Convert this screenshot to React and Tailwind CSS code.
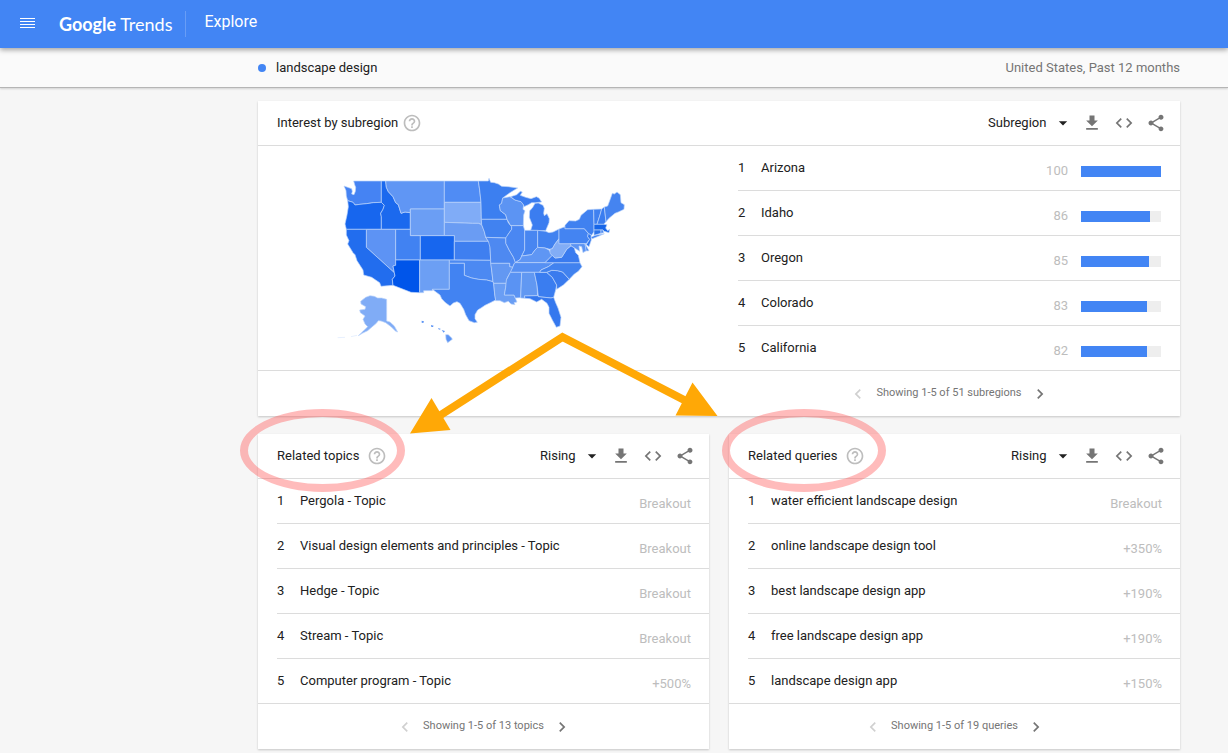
import React from 'react';
import {
  MdGetApp,
  MdCode,
  MdShare,
  MdHelpOutline,
  MdArrowDropDown,
  MdChevronLeft,
  MdChevronRight,
} from 'react-icons/md';

const subregions = [
  { name: 'Arizona', value: 100 },
  { name: 'Idaho', value: 86 },
  { name: 'Oregon', value: 85 },
  { name: 'Colorado', value: 83 },
  { name: 'California', value: 82 },
];

const topics = [
  { name: 'Pergola - Topic', value: 'Breakout' },
  { name: 'Visual design elements and principles - Topic', value: 'Breakout' },
  { name: 'Hedge - Topic', value: 'Breakout' },
  { name: 'Stream - Topic', value: 'Breakout' },
  { name: 'Computer program - Topic', value: '+500%' },
];

const queries = [
  { name: 'water efficient landscape design', value: 'Breakout' },
  { name: 'online landscape design tool', value: '+350%' },
  { name: 'best landscape design app', value: '+190%' },
  { name: 'free landscape design app', value: '+190%' },
  { name: 'landscape design app', value: '+150%' },
];

// [state, fill, outline]
const states = [
  ['WA', '#4583f3', '27,48 38,52 50,56 52,64 50,72 57,74 61,64 62,52 59,44 56,33 139,33 139,97 115,98 95,101 75,103 60,105 54,97 38,92 34,78 33,62'],
  ['OR', '#1766ee', '38,92 54,97 60,105 75,103 95,101 115,98 139,97 148,106 144,118 137,130 139,140 139,178 34,178 30,162 36,135 40,110'],
  ['ID', '#1b69ee', '139,33 152,33 154,52 160,65 174,80 182,98 190,104 198,130 210,126 226,128 226,178 139,178 139,140 137,130 144,118 148,106 139,97'],
  ['MT', '#6096f4', '152,33 328,33 328,117 226,117 226,128 210,126 198,130 190,104 182,98 174,80 160,65 154,52'],
  ['WY', '#6b9ef4', '226,117 328,117 328,197 226,197'],
  ['ND', '#508cf4', '328,33 430,33 434,60 438,97 328,97'],
  ['SD', '#80acf7', '328,97 438,97 439,148 440,164 430,160 412,160 328,157'],
  ['NE', '#6a9cf3', '328,157 412,160 430,160 440,164 448,185 452,202 460,214 358,214 358,197 328,197'],
  ['NV', '#5d93f4', '94,178 182,178 182,286 174,288 178,308 94,232'],
  ['CA', '#226dee', '34,178 94,178 94,232 178,308 180,318 172,328 174,346 138,349 134,338 122,330 110,322 86,315 84,300 66,272 60,254 54,248 38,222 42,212 34,195'],
  ['UT', '#4182f2', '182,178 226,178 226,197 256,197 256,270 182,270'],
  ['CO', '#1766ee', '256,197 358,197 358,270 256,270'],
  ['AZ', '#0055ea', '182,270 254,270 254,368 228,367 174,346 172,328 180,318 178,308 174,288 182,286'],
  ['NM', '#6c9ff4', '254,270 343,270 343,358 292,358 292,362 266,362 266,368 254,368'],
  ['KS', '#3f7ff0', '358,214 460,214 466,222 465,232 467,271 358,270'],
  ['OK', '#4c89f2', '343,270 467,271 470,300 474,335 455,330 430,328 410,324 388,316 388,280 343,280'],
  ['TX', '#4283f2', '343,280 388,280 388,316 410,324 430,328 455,330 474,335 476,340 479,372 482,390 466,398 450,406 438,414 428,420 420,434 420,446 427,457 418,458 402,452 392,434 386,418 375,400 366,395 355,399 345,408 330,397 320,386 315,375 292,358 343,358'],
  ['MN', '#3c7ff0', '430,33 460,33 462,25 467,37 478,38 490,42 500,49 520,50 548,54 525,68 503,84 500,100 493,105 496,122 512,134 516,148 439,148 438,97 434,60'],
  ['IA', '#4182f0', '439,148 516,148 520,158 530,170 530,178 520,192 516,200 512,204 452,202 448,185 440,164'],
  ['WI', '#5c94f3', '503,84 525,80 540,90 558,95 566,105 564,118 570,122 566,135 565,167 527,167 516,148 512,134 496,122 493,105 500,100'],
  ['MI', '#3b7df0', '527,80 545,74 556,64 562,66 556,76 572,82 588,86 604,80 612,84 620,96 602,98 590,98 580,104 567,110 566,105 558,95 540,90'],
  ['MI-lower', '#3b7df0', '600,100 610,99 624,106 628,115 626,130 628,137 636,131 643,146 642,158 632,182 587,181 592,165 583,142 584,122 592,114'],
  ['IL', '#4a87f2', '527,167 565,167 569,181 569,240 562,254 556,268 541,278 535,262 522,240 512,220 512,204 520,192 530,178 530,170'],
  ['MO', '#4e89f1', '452,202 512,204 512,220 522,240 535,262 541,278 538,280 533,292 524,290 524,280 467,280 467,271 465,232 460,214'],
  ['IN', '#4886f1', '569,181 608,181 608,232 600,240 590,254 560,258 562,254 569,240'],
  ['OH', '#4182f0', '608,181 632,184 642,188 654,186 672,177 672,206 660,222 652,236 645,238 630,234 608,232'],
  ['KY', '#5f96f4', '541,278 556,268 560,258 590,254 600,240 608,232 630,234 642,240 652,256 630,278'],
  ['TN', '#5690f3', '538,280 541,278 657,278 640,290 618,300 614,307 524,307 533,292'],
  ['AR', '#6398f2', '467,280 524,280 524,290 533,292 526,307 516,325 514,340 476,340 474,335 470,300'],
  ['LA', '#6a9ef4', '476,340 514,340 512,352 508,375 537,375 541,384 546,396 537,398 540,404 528,402 520,394 508,398 495,392 482,392 479,372'],
  ['MS', '#5a93f3', '526,307 560,307 557,383 541,384 537,375 508,375 512,352 514,330'],
  ['AL', '#6198f2', '560,307 598,307 606,345 608,377 568,378 570,385 557,384'],
  ['GA', '#3a7df0', '598,307 635,307 652,322 665,345 662,360 656,382 648,384 610,380 606,345'],
  ['FL', '#3578ee', '568,378 608,377 610,380 648,384 656,382 662,398 669,414 678,442 675,468 664,472 652,450 642,430 642,412 636,400 620,388 605,396 585,386 570,385'],
  ['SC', '#3a7bee', '635,307 650,301 668,302 683,306 703,328 685,345 665,358 665,345 652,322'],
  ['NC', '#4182ef', '657,278 735,278 741,290 730,304 718,312 703,328 683,306 668,302 650,301 635,307 614,307 618,300 640,290'],
  ['VA', '#3a7bef', '630,278 652,256 660,264 680,262 695,238 708,227 718,234 722,248 730,256 735,278'],
  ['WV', '#82adf6', '672,206 673,221 706,221 708,227 695,238 680,262 660,264 645,250 645,238 652,236 660,222'],
  ['PA', '#4484f2', '672,177 690,170 690,176 748,176 760,190 758,200 764,208 754,221 672,221'],
  ['MD', '#5c94f3', '706,221 750,221 754,242 744,248 740,230 732,228 734,244 722,236 708,227'],
  ['DE', '#4484f2', '750,221 756,232 762,242 754,243'],
  ['NJ', '#3076ee', '760,190 768,194 769,210 762,230 754,224 764,208 758,200'],
  ['NY', '#4081f0', '690,176 690,166 702,152 722,153 733,148 738,136 758,119 776,118 777,163 777,185 770,196 760,190 748,176'],
  ['LI', '#4081f0', '768,202 780,196 808,191 790,199 772,206'],
  ['VT', '#4081f0', '776,118 800,117 795,135 786,163 777,163'],
  ['NH', '#3a7df0', '800,117 808,111 813,155 806,163 786,163 795,135'],
  ['ME', '#4584f0', '808,111 818,108 824,92 832,70 838,72 846,66 856,74 858,98 868,104 867,118 850,126 840,130 822,145 813,155'],
  ['MA', '#1766e8', '777,163 806,163 816,164 812,174 818,182 824,178 822,188 808,184 804,180 777,180'],
  ['CT', '#2e74ea', '777,180 798,180 798,190 777,196'],
  ['RI', '#4584f0', '798,180 804,180 806,188 798,190'],
  ['AK', '#80acf6', '105,377 118,379 128,384 140,384 155,388 155,453 165,456 178,468 188,486 182,484 168,470 152,458 138,453 130,452 124,460 112,470 98,482 82,490 70,497 84,484 98,470 90,462 84,448 90,438 76,428 74,420 90,418 92,410 78,402 77,394 92,382'],
  ['HI', '#5c94f4', '332,494 340,494 350,504 352,508 338,518 333,508'],
];

const UsMap = () => (
  <svg className="h-[180px] w-[300px]" viewBox="0 0 900 540" role="img" aria-label="Interest by state">
    {states.map(([id, fill, points]) => (
      <polygon key={id} points={points} fill={fill} stroke="#bcd5fb" strokeWidth="2" strokeLinejoin="round" />
    ))}
    {/* Smaller Hawaiian islands */}
    <path d="M260,452 L267,454 L265,459 L260,458 Z M288,465 L296,467 L294,471 L289,471 Z M309,474 L318,477 L312,479 Z M320,480 L330,483 L326,488 Z" fill="#5c94f4" />
    {/* Aleutians */}
    <path d="M8,503 L30,502 M48,500 L66,496" stroke="#dbe8fd" strokeWidth="2" />
  </svg>
);

const HeaderArrows = () => (
  <svg
    className="pointer-events-none absolute right-1/2 top-[229px] z-10 h-[106px] w-[310px]"
    viewBox="409 330 310 106"
    aria-hidden="true"
  >
    <path d="M436 418 L562.5 337 L690 403" fill="none" stroke="#ffa806" strokeWidth="8" />
    <path d="M410 433.500 L431.500 398 L450.500 430 Z M717.500 416 L692.500 382.500 L675.500 415.500 Z" fill="#ffa806" />
  </svg>
);

const CardHeader = ({ title, mode, helpClass = 'ml-2' }) => (
  <div className="flex h-[45px] items-center border-b border-[#dcdcdc] pl-[19px] pr-[14px]">
    <h2>{title}</h2>
    <button className={`text-[#bdbdbd] ${helpClass}`} aria-label={`Help: ${title}`}>
      <MdHelpOutline className="h-5 w-5" />
    </button>
    <div className="relative ml-auto mr-[9px] flex items-center">
      <select className="appearance-none bg-transparent pr-[26px]" aria-label={`${title} view`}>
        <option>{mode}</option>
      </select>
      <MdArrowDropDown className="pointer-events-none absolute right-0 h-5 w-5" />
    </div>
    <div className="flex gap-3 text-[#757575]">
      <button aria-label="Download CSV">
        <MdGetApp className="h-5 w-5" />
      </button>
      <button aria-label="Embed">
        <MdCode className="h-5 w-5" />
      </button>
      <button aria-label="Share">
        <MdShare className="h-5 w-5" />
      </button>
    </div>
  </div>
);

const Pager = ({ label, className = '' }) => (
  <div className={`flex h-[45px] items-center justify-center gap-2 text-[11px] text-[#757575] ${className}`}>
    <button className="text-[#d0d0d0]" disabled aria-label="Previous">
      <MdChevronLeft className="h-5 w-5" />
    </button>
    <span>{label}</span>
    <button aria-label="Next">
      <MdChevronRight className="h-5 w-5" />
    </button>
  </div>
);

const RelatedCard = ({ title, rows, label, children }) => (
  <section className="relative bg-white shadow-[0_1px_2px_rgba(0,0,0,0.2)]">
    <CardHeader title={title} mode="Rising" />
    <div className="border-b border-[#dcdcdc]">
      <ol className="ml-[19px] divide-y divide-[#dcdcdc]">
        {rows.map((row, i) => (
          <li key={row.name} className="flex h-[45px] items-center pr-[18px] last:h-11">
            <span className="w-[23px]">{i + 1}</span>
            <a href="#" className="flex-1">{row.name}</a>
            <span className="pt-1.5 text-[#bdbdbd]">{row.value}</span>
          </li>
        ))}
      </ol>
    </div>
    <Pager label={label} />
    {children}
  </section>
);

const App = () => {
  return (
    <div className="min-h-screen bg-[#f6f6f6] font-[Roboto,sans-serif] text-[13px] text-[#212121]">
      <header className="relative z-20 flex h-12 items-center bg-[#4285f4] text-white shadow-[0_2px_5px_rgba(0,0,0,0.35)]">
        <button className="ml-5" aria-label="Main menu">
          <svg className="h-4 w-[15px]" viewBox="0 0 15 16" fill="currentColor">
            <path d="M0 2h15v1H0zM0 5h15v1H0zM0 8h15v1H0zM0 11h15v1H0z" />
          </svg>
        </button>
        <a href="#" className="ml-6 flex gap-1 font-[Lato,sans-serif] text-[18px]">
          <span className="font-bold">Google</span>
          <span>Trends</span>
        </a>
        <span className="ml-[13px] h-[26px] w-px bg-[#689df6]" />
        <h1 className="ml-[18px] pb-1 text-[16px]">Explore</h1>
      </header>

      <div className="relative z-10 flex h-10 items-center border-b border-[#b5b5b5] bg-[#fafafa] pl-[258px] pr-12 shadow-[0_1px_2px_rgba(0,0,0,0.15)]">
        <span className="mr-[10px] h-2 w-2 rounded-full bg-[#4285f4]" />
        <span>landscape design</span>
        <span className="ml-auto text-[#757575]">United States, Past 12 months</span>
      </div>

      <main className="relative pb-1 pl-[258px] pr-12 pt-[13px]">
        <section className="relative bg-white shadow-[0_1px_2px_rgba(0,0,0,0.2)]">
          <CardHeader title="Interest by subregion" mode="Subregion" helpClass="ml-1" />
          <div className="flex border-b border-[#dcdcdc]">
            <div className="flex w-[480px] items-center pl-[77px] pt-1">
              <UsMap />
            </div>
            <ol className="flex-1 divide-y divide-[#dcdcdc]">
              {subregions.map((row, i) => (
                <li key={row.name} className="flex h-[45px] items-center pr-[19px] last:h-11">
                  <span className="w-[23px]">{i + 1}</span>
                  <a href="#" className="flex-1">{row.name}</a>
                  <span className="mr-[13px] pt-1.5 text-[#bdbdbd]">{row.value}</span>
                  <span className="mt-1.5 h-[11px] w-20 bg-[#eeeeee]">
                    <span className="block h-full bg-[#4285f4]" style={{ width: `${row.value}%` }} />
                  </span>
                </li>
              ))}
            </ol>
          </div>
          <Pager label="Showing 1-5 of 51 subregions" className="pl-[480px] pr-5" />
          <HeaderArrows />
        </section>

        <div className="mt-[18px] grid grid-cols-2 gap-5">
          <RelatedCard title="Related topics" rows={topics} label="Showing 1-5 of 13 topics">
            <span className="pointer-events-none absolute -left-[18px] -top-[25px] h-[83px] w-[165px] rounded-[50%] border-8 border-[#ff5555]/40" />
          </RelatedCard>
          <RelatedCard title="Related queries" rows={queries} label="Showing 1-5 of 19 queries">
            <span className="pointer-events-none absolute -left-[7px] -top-[25px] h-[83px] w-[164px] rounded-[50%] border-8 border-[#ff5555]/40" />
          </RelatedCard>
        </div>
      </main>
    </div>
  );
};

export default App;
